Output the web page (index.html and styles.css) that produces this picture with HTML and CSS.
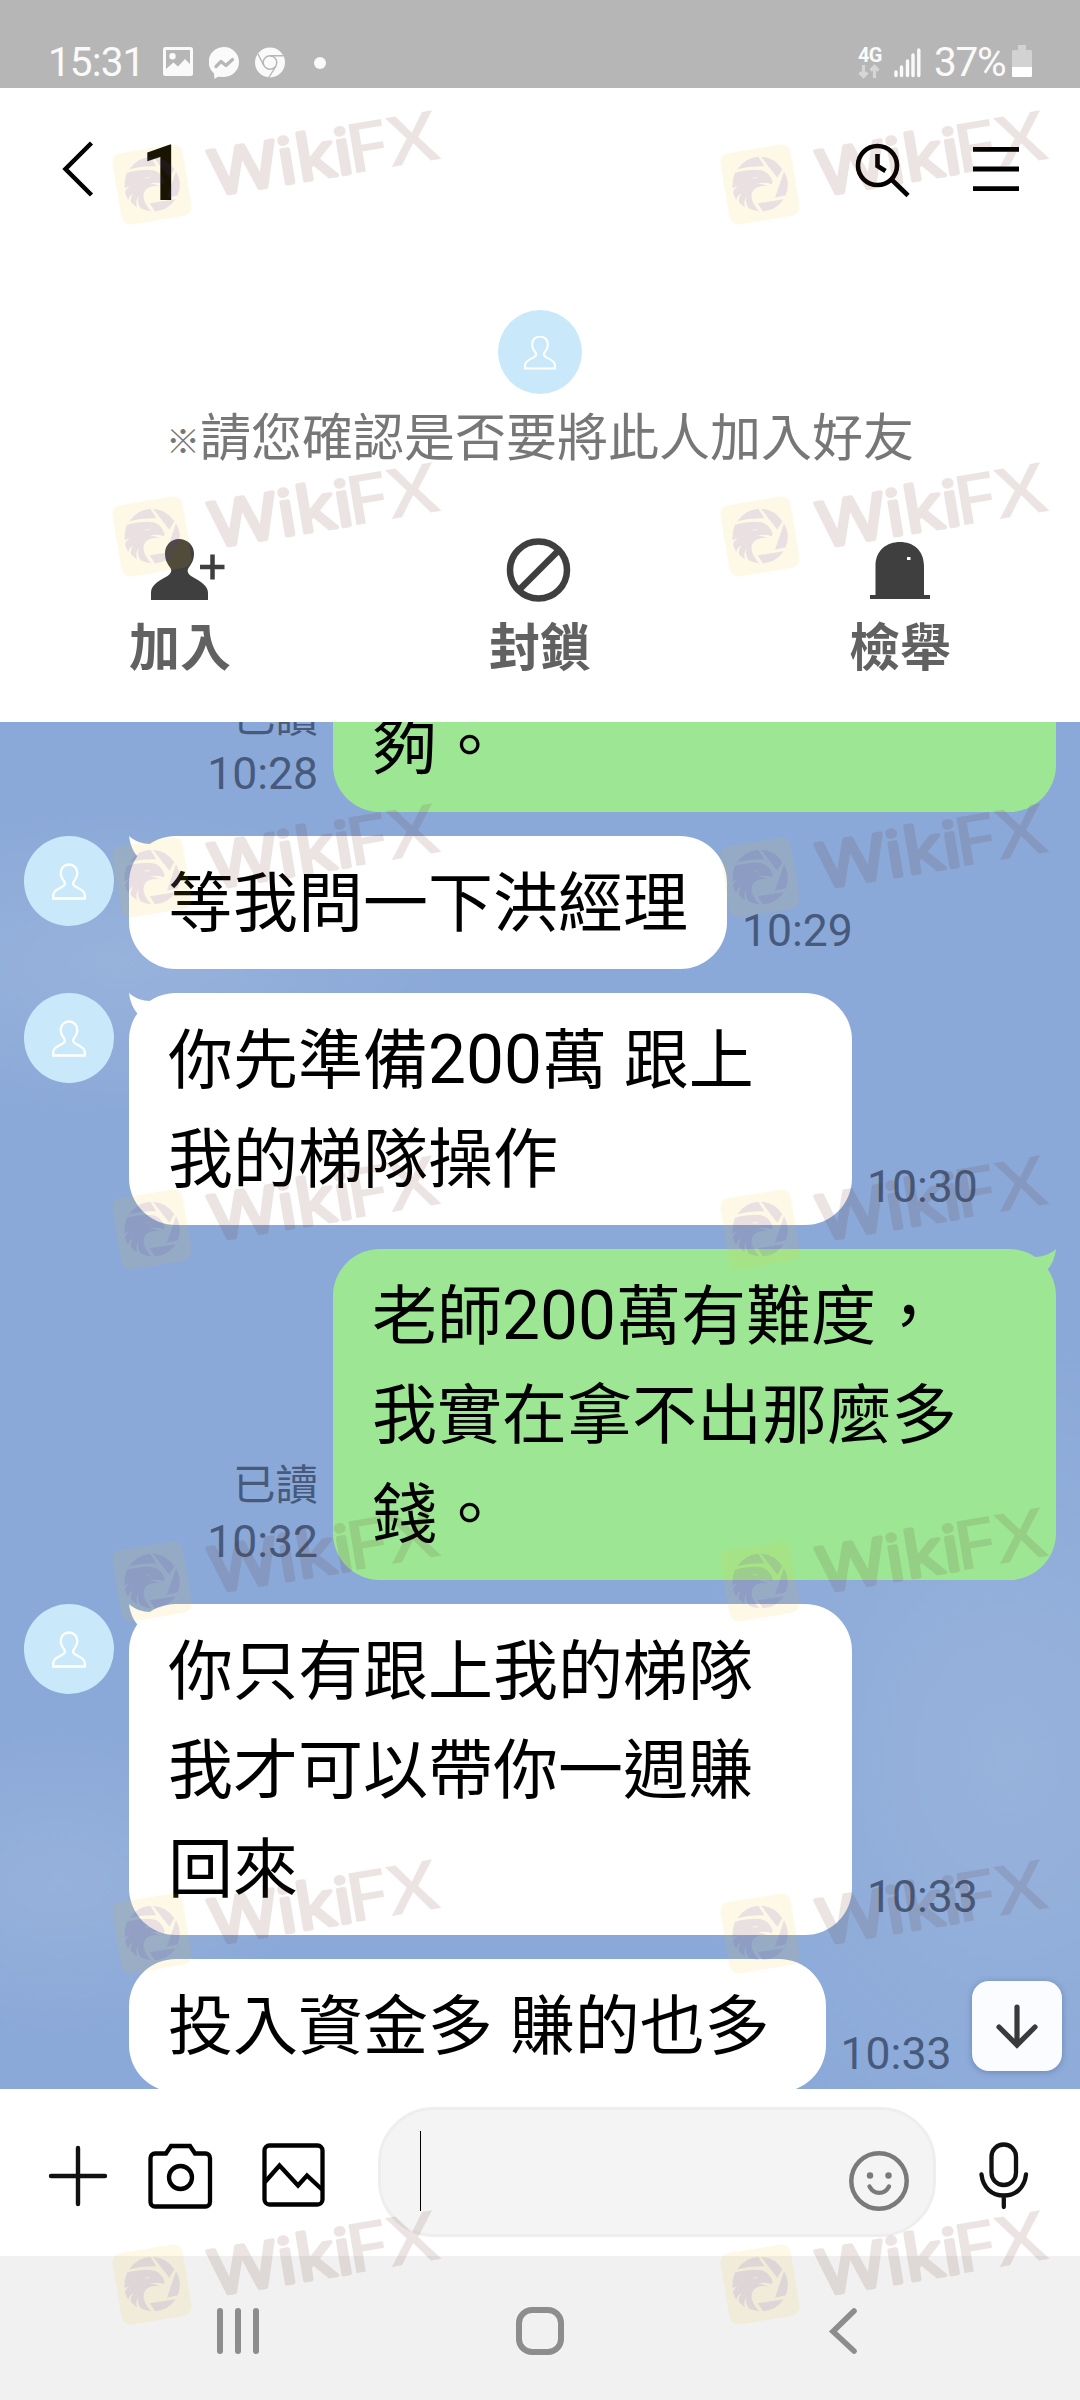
FILE: index.html
```html
<!DOCTYPE html>
<html lang="zh-Hant-TW">
<head>
<meta charset="utf-8">
<title>Chat</title>
<link rel="stylesheet" href="styles.css">
</head>
<body>
<svg class="defs" width="0" height="0" aria-hidden="true">
  <symbol id="person" viewBox="0 0 34 37"><path d="M17 1.500c-5 0-8.300 3.800-8.300 8.500 0 3.800 1.800 6.400 3.800 9 1.200 2-.2 3.700-2.200 4.700C5 26.200 1.200 28.400 1.200 31.500v4h31.600v-4c0-3.100-3.800-5.300-9.100-7.800-2-1-3.400-2.700-2.200-4.700 2-2.600 3.800-5.200 3.800-9 0-4.700-3.300-8.500-8.300-8.500z" fill="none" stroke="#fff" stroke-width="2.300"/></symbol>
  <symbol id="tail" viewBox="0 0 32 32"><path d="M0 0C5 5 14 8 21 8L32 12L20 32L9 21C4 16 1 8 0 0Z" fill="currentColor"/></symbol>
</svg>
<div class="screen">
  <div class="status">
    <div class="status-left">
      <span class="clock">15:31</span>
      <svg class="s-icon" width="30" height="30" viewBox="0 0 30 30"><path fill="#fafafa" fill-rule="evenodd" d="M2.500 0h25A2.500 2.500 0 0 1 30 2.500v24a2.500 2.500 0 0 1-2.500 2.500h-25A2.500 2.500 0 0 1 0 26.500v-24A2.500 2.500 0 0 1 2.500 0zM3 3v19l7.500-6.500 4.500 4 7-7.500 5 5V3zm6.500 3a3.200 3.200 0 1 1 0 6.400 3.200 3.200 0 0 1 0-6.400z"/></svg>
      <svg class="s-icon" width="30" height="32" viewBox="0 0 30 32"><path fill="#fafafa" d="M15 0a15 15 0 0 1 0 30l-6-.3L5.500 32 5 26.500A15 15 0 0 1 15 0z"/><path d="M7 19.500l5-5 5 4 6.500-6" fill="none" stroke="#b6b6b6" stroke-width="3.200" stroke-linecap="round" stroke-linejoin="round"/></svg>
      <svg class="s-icon" width="30" height="32" viewBox="0 0 30 32"><circle cx="15" cy="15.500" r="15" fill="#fafafa"/><g fill="none" stroke="#b6b6b6" stroke-width="1.400"><circle cx="15" cy="15.500" r="6.800"/><path d="M15 8.700h13.500M9 19L3 7M21 19l-7.500 12"/></g></svg>
      <i class="dot"></i>
    </div>
    <div class="status-right">
      <div class="net"><b>4G</b><svg width="22" height="15" viewBox="0 0 22 15"><path d="M5.500 1v11M1.500 8.500l4 4 4-4M16.500 14V3M12.500 6.500l4-4 4 4" fill="none" stroke="#d6d6d6" stroke-width="3.200"/></svg></div>
      <svg class="bars" width="27" height="31" viewBox="0 0 27 31"><path d="M2 25v3.500M7.500 20v8.500M13.500 14v14.500M19 8v20.500M24.800 3v25.500" stroke="#fafafa" stroke-width="3.400" stroke-linecap="round"/></svg>
      <span class="pct">37%</span>
      <svg width="20" height="33" viewBox="0 0 20 33"><path d="M6 0h8v5h4.500A1.500 1.500 0 0 1 20 6.500V22H0V6.500A1.500 1.500 0 0 1 1.500 5H6z" fill="#d2d2d2"/><path d="M0 22h20v8.500a1.500 1.500 0 0 1-1.500 1.500h-17A1.500 1.500 0 0 1 0 30.500z" fill="#fff"/></svg>
    </div>
  </div>

  <header class="header">
    <svg class="back" width="32" height="58" viewBox="0 0 32 58"><path d="M29.500 3L3.500 29l26 26" fill="none" stroke="#000" stroke-width="4.500"/></svg>
    <h1 class="title">1</h1>
    <svg class="search" width="56" height="58" viewBox="0 0 56 58"><g fill="none" stroke="#000" stroke-width="4.600"><circle cx="22.500" cy="24.500" r="19.500"/><path d="M37 39l16 15.500M22.500 13v12l8 5"/></g></svg>
    <svg class="menu" width="46" height="46" viewBox="0 0 46 46"><path d="M0 3.300h46M0 23h46M0 42.700h46" stroke="#000" stroke-width="4.800"/></svg>
  </header>

  <section class="friend">
    <div class="avatar big"><svg width="32" height="35"><use href="#person"/></svg></div>
    <p class="notice"><span class="mark">※</span>請您確認是否要將此人加入好友</p>
    <div class="actions">
      <div class="action">
        <svg class="add" width="86" height="64" viewBox="0 0 86 64"><path d="M39 1c-8.500 0-14 6.500-14 14.500 0 6.500 2.500 10.500 5.500 14.500 2 3-.5 6.500-3 8C16 44 11 48 11 55v7h57v-7c0-7-6-11-17-17-2.500-1.500-4.500-5-2.500-8 3-4 5.500-8 5.500-14.500C54 7.500 47.500 1 39 1z" fill="#3f3f3f"/><path d="M60 29h24.500M72.500 16.500v25" stroke="#3f3f3f" stroke-width="4.500"/></svg>
        <span>加入</span>
      </div>
      <div class="action">
        <svg width="68" height="64" viewBox="0 0 68 64"><circle cx="32.500" cy="32" r="28.500" fill="none" stroke="#3f3f3f" stroke-width="6.500"/><path d="M14 51L51 14" stroke="#3f3f3f" stroke-width="6.500"/></svg>
        <span>封鎖</span>
      </div>
      <div class="action">
        <svg width="62" height="64" viewBox="0 0 62 64"><path d="M6.500 57V28C6.500 12 18 4 31 4s24 8 24 24v29h6v4H1v-4z" fill="#3f3f3f"/><path d="M38 19h3.500v3H38z" fill="#fff"/></svg>
        <span>檢舉</span>
      </div>
    </div>
  </section>

  <main class="chat">
    <div class="row sent">
      <div class="meta"><span class="read">已讀</span><time>10:28</time></div>
      <div class="bubble wide cont">夠。</div>
    </div>
    <div class="row">
      <div class="avatar"><svg width="34" height="37"><use href="#person"/></svg></div>
      <div class="bubble"><svg class="tail"><use href="#tail"/></svg>等我問一下洪經理</div>
      <time>10:29</time>
    </div>
    <div class="row">
      <div class="avatar"><svg width="34" height="37"><use href="#person"/></svg></div>
      <div class="bubble wide"><svg class="tail"><use href="#tail"/></svg>你先準備<span class="num">200</span>萬<span class="num"> </span>跟上<br>我的梯隊操作</div>
      <time>10:30</time>
    </div>
    <div class="row sent">
      <div class="meta"><span class="read">已讀</span><time>10:32</time></div>
      <div class="bubble wide"><svg class="tail"><use href="#tail"/></svg>老師<span class="num">200</span>萬有難度，<br>我實在拿不出那麼多<br>錢。</div>
    </div>
    <div class="row">
      <div class="avatar"><svg width="34" height="37"><use href="#person"/></svg></div>
      <div class="bubble wide"><svg class="tail"><use href="#tail"/></svg>你只有跟上我的梯隊<br>我才可以帶你一週賺<br>回來</div>
      <time>10:33</time>
    </div>
    <div class="row follow">
      <div class="bubble">投入資金多<span class="num"> </span>賺的也多<span class="num">&nbsp;</span></div>
      <time>10:33</time>
    </div>
    <div class="to-bottom"><svg width="44" height="48" viewBox="0 0 44 48"><path d="M22 5v38M4 25l18 18 18-18" fill="none" stroke="#3a3a3a" stroke-width="5.200" stroke-linecap="round"/></svg></div>
  </main>

  <footer class="composer">
    <svg class="plus" width="60" height="62" viewBox="0 0 60 62"><path d="M30 3v56M3 31h54" stroke="#111" stroke-width="4.400" stroke-linecap="round"/></svg>
    <svg class="camera" width="66" height="66" viewBox="0 0 66 66"><g fill="none" stroke="#000" stroke-width="4.300"><path d="M8 10.500H19l5-7.500h19l5 7.500h10.500A4.500 4.500 0 0 1 63 15v44a4.500 4.500 0 0 1-4.500 4.500H8A4.500 4.500 0 0 1 3.500 59V15A4.500 4.500 0 0 1 8 10.500z"/><circle cx="33.500" cy="34.500" r="11.500"/></g></svg>
    <svg class="photo" width="64" height="66" viewBox="0 0 64 66"><g fill="none" stroke="#000" stroke-width="4.300"><rect x="2.500" y="3.500" width="58" height="59" rx="5"/><path d="M3 40l14.500-16.500L36 43.500l9-10L60 47.500"/></g></svg>
    <div class="field">
      <i class="caret"></i>
      <svg width="60" height="60" viewBox="0 0 60 60"><circle cx="30" cy="30" r="27.700" fill="none" stroke="#7a7a7a" stroke-width="4.500"/><circle cx="21" cy="24.500" r="3.200" fill="#7a7a7a"/><circle cx="39.500" cy="24.500" r="3.200" fill="#7a7a7a"/><path d="M20.500 35.500c4.500 8.500 15 8.500 19.500 0" fill="none" stroke="#7a7a7a" stroke-width="4.300" stroke-linecap="round"/></svg>
    </div>
    <svg class="mic" width="50" height="68" viewBox="0 0 50 68"><g fill="none" stroke="#111" stroke-width="4.300" stroke-linecap="round"><rect x="12.500" y="2.500" width="24.500" height="40.500" rx="12.250"/><path d="M2.500 32.500C4 46 13 53.500 24.800 53.500S45.500 46 47 32.500M24.800 54v11"/></g></svg>
  </footer>

  <nav class="nav">
    <svg width="44" height="50" viewBox="0 0 44 50"><path d="M4 5v40M22 5v40M40 5v40" stroke="#8d8d8d" stroke-width="6" stroke-linecap="round"/></svg>
    <svg width="48" height="50" viewBox="0 0 48 50"><rect x="3" y="4" width="42" height="42" rx="13" fill="none" stroke="#8d8d8d" stroke-width="6"/></svg>
    <svg width="30" height="50" viewBox="0 0 30 50"><path d="M26 5L5 25.500 26 45" fill="none" stroke="#8d8d8d" stroke-width="5.600" stroke-linecap="round"/></svg>
  </nav>

  <svg class="watermarks" width="1080" height="2400" viewBox="0 0 1080 2400">
    <defs>
      <g id="wm">
        <rect x="-35.500" y="-36" width="71" height="72" rx="9" transform="translate(40 40.500) rotate(-9.500)" fill="rgba(250,185,20,.1)"/>
        <g transform="translate(-5 -4) scale(.3333)" fill="rgba(90,60,190,.12)">
          <path d="M67 88A82 82 0 0 1 130 50L148 79Q105 77 67 88Z"/>
          <path d="M138 50A82 82 0 0 1 202 88L187 113Z"/>
          <path d="M207 94A82 82 0 0 1 212 166L180 173Z"/>
          <path d="M128 190L206 178A82 82 0 0 1 144 214Z"/>
          <path d="M60 98Q105 87 132 90Q163 92 173 126L170 133Q158 125 128 131Q148 132 158 139Q138 136 127 142C104 152 102 182 133 214Q112 211 101 205Q88 185 96 166Q84 184 90 202Q77 192 72 186Q70 172 79 160Q66 166 64 180Q56 167 54 156Q60 142 70 138Q58 141 53 145Q51 118 60 98ZM111 111Q122 120 131 112Q122 114 111 111Z" fill-rule="evenodd"/>
        </g>
        <g class="wm-text" transform="translate(101 53) rotate(-9.500)"><text class="soft" x="1" y="-1" textLength="144" lengthAdjust="spacingAndGlyphs">Wiki</text><text class="hard" x="138" y="0" textLength="94" lengthAdjust="spacingAndGlyphs">FX</text></g>
      </g>
    </defs>
    <use href="#wm" x="112" y="144"/><use href="#wm" x="720" y="144"/>
    <use href="#wm" x="112" y="496"/><use href="#wm" x="720" y="496"/>
    <use href="#wm" x="112" y="837"/><use href="#wm" x="720" y="837"/>
    <use href="#wm" x="112" y="1189"/><use href="#wm" x="720" y="1189"/>
    <use href="#wm" x="112" y="1541"/><use href="#wm" x="720" y="1541"/>
    <use href="#wm" x="112" y="1893"/><use href="#wm" x="720" y="1893"/>
    <use href="#wm" x="112" y="2244"/><use href="#wm" x="720" y="2244"/>
  </svg>
</div>
</body>
</html>
```
FILE: styles.css
```css
* { box-sizing: border-box; }
body { margin: 0; font-family: Roboto, "Noto Sans CJK TC", sans-serif; background: #fff; }
svg { display: block; flex: none; }
.defs { position: absolute; }
.screen { position: relative; width: 1080px; height: 2400px; display: flex; flex-direction: column; overflow: hidden; }

/* status bar */
.status { height: 88px; flex: none; background: #b6b6b6; color: #fafafa; display: flex; justify-content: space-between; align-items: flex-start; padding: 45px 48px 0 48px; font-size: 40.5px; line-height: 35px; }
.status-left, .status-right { display: flex; align-items: flex-start; }
.clock { width: 115px; letter-spacing: -.9px; }
.s-icon { margin: 2px 16px 0 0; }
.dot { width: 12px; height: 12px; border-radius: 50%; background: #fafafa; margin: 12px 0 0 13px; }
.net { width: 24px; margin: 1px 12px 0 0; }
.net b { display: block; font-size: 20px; line-height: 19px; font-weight: 700; letter-spacing: -.8px; height: 18px; }
.bars { margin: 2px 13px 0 0; }
.pct { letter-spacing: -1.200px; width: 78px; }

/* header */
.header { height: 162px; flex: none; display: flex; align-items: center; padding: 0 61px 0 62px; }
.title { margin: 9px 0 0 47px; flex: 1; font-size: 77px; line-height: 90px; font-weight: 700; }
.search { margin: 1px 62px 0 0; }

.friend { height: 472px; flex: none; display: flex; flex-direction: column; align-items: center; padding-top: 60px; }
.avatar { width: 90px; height: 90px; border-radius: 50%; background: #c9e9fb; display: flex; align-items: center; justify-content: center; flex: none; margin-right: 15px; }
.avatar.big { width: 84px; height: 84px; margin: 0; }
.notice { margin: 15px 0 0; font-size: 51px; line-height: 60px; color: #777; white-space: nowrap; }
.mark { font-size: 34px; font-weight: 700; vertical-align: 2px; }
.actions { align-self: stretch; display: grid; grid-template-columns: repeat(3, 1fr); margin-top: 66px; }
.action { display: flex; flex-direction: column; align-items: center; color: #616161; font-size: 51px; line-height: 60px; font-weight: 700; }
.action span { margin-top: 17px; }
.action svg { height: 64px; }
.action .add { margin-left: 5px; }

/* conversation */
.chat { position: relative; height: 1367px; flex: none; overflow: hidden; display: flex; flex-direction: column; justify-content: flex-end; gap: 24px; padding: 0 24px;
  background:
    radial-gradient(ellipse 330px 420px at 1010px 1040px, rgba(163,188,224,.5), transparent),
    radial-gradient(ellipse 240px 150px at 60px 1160px, rgba(163,188,224,.45), transparent),
    radial-gradient(ellipse 330px 150px at 120px 240px, rgba(163,188,224,.5), transparent),
    #8ba9d8; }
.row { display: flex; flex: none; align-items: flex-start; }
.row.follow { padding-left: 105px; margin-bottom: -3px; }
.row.sent { justify-content: flex-end; }
.bubble { position: relative; background: #fff; color: #000; border-radius: 47px; padding: 19px 39px 15px; font-size: 65px; line-height: 99px; white-space: pre; }
.bubble.wide { width: 723px; }
.sent .bubble { background: #9de794; }
.bubble.cont { padding-top: 60px; }
.num { font-size: 67.600px; line-height: 0; }
.tail { position: absolute; left: 0; top: 0; width: 32px; height: 32px; color: #fff; }
.sent .tail { left: auto; right: 0; color: #9de794; transform: scaleX(-1); }
time, .meta { align-self: flex-end; color: #475a7b; font-size: 44.500px; line-height: 56px; }
.row > time { margin: 0 0 10px 15px; }
.meta { display: flex; flex-direction: column; align-items: flex-end; margin: 0 15px 10px 0; }
.read { font-size: 42.500px; line-height: 56px; }
.to-bottom { position: absolute; left: 972px; top: 1259px; width: 90px; height: 90px; border-radius: 17px; background: #fafcff; box-shadow: 0 1px 6px rgba(40,60,100,.35); display: flex; align-items: center; justify-content: center; }

/* composer */
.composer { height: 167px; flex: none; display: flex; align-items: flex-start; padding-left: 48px; }
.plus { margin-top: 56px; }
.camera { margin: 54px 0 0 39px; }
.photo { margin: 53px 0 0 49px; }
.field { width: 558px; height: 130px; margin: 18px 0 0 52px; border: 3px solid #eee; border-radius: 56px; background: #f4f4f4; display: flex; align-items: flex-start; justify-content: space-between; padding: 21px 24px 0 39px; }
.caret { width: 1px; height: 80px; background: #000; }
.field svg { margin-top: 20px; }
.mic { margin: 53px 0 0 43px; }

.nav { height: 144px; flex: none; background: #f1f1f1; display: grid; grid-template-columns: 44px 48px 30px; column-gap: 256px; align-items: start; padding: 50px 0 0 216px; }
.nav svg:last-child { margin-left: 8px; }

.watermarks { position: absolute; left: 0; top: 0; pointer-events: none; }
.wm-text { font-family: "Open Sans", sans-serif; font-weight: 700; font-size: 69px; fill: rgb(96,46,30); stroke: rgb(96,46,30); opacity: .12; }
.soft { stroke-width: 4px; stroke-linejoin: round; font-size: 63px; font-weight: 500; }
.hard { stroke-width: 0; font-weight: 600; }
```
